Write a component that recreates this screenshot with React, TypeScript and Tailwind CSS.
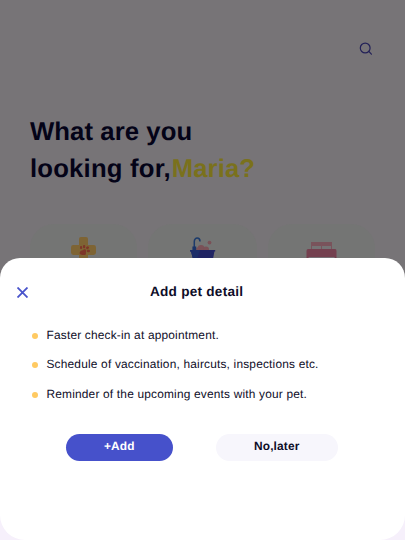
import React from "react";

const benefits = [
  "Faster check-in at appointment.",
  "Schedule of vaccination, haircuts, inspections etc.",
  "Reminder of the upcoming events with your pet.",
];

function SearchIcon() {
  return (
    <svg width="14" height="14" viewBox="0 0 14 14" fill="none" stroke="#232158" strokeWidth="1.2" strokeLinecap="round">
      <circle cx="6.2" cy="6" r="4.9" />
      <path d="M9.8 9.4L12.4 12.2" />
    </svg>
  );
}

function VetIcon() {
  return (
    <svg width="25" height="26" viewBox="0 0 25 26">
      <rect x="8" y="0" width="9" height="26" rx="2" fill="#7e6434" />
      <rect x="0" y="8" width="25" height="10" rx="2.4" fill="#7e6434" />
      <g fill="#7d3528">
        <rect x="9" y="9" width="2.1" height="3" rx="0.9" />
        <rect x="12" y="8" width="2.2" height="3.2" rx="1" />
        <ellipse cx="16.5" cy="10.7" rx="1.6" ry="1.3" transform="rotate(-40 16.5 10.7)" />
        <ellipse cx="17.4" cy="14" rx="1.6" ry="1.2" />
        <path d="M8.8 15.2C9.6 13.4 11.6 13.8 12.7 12.6C14.6 11.4 15.6 13 15 14.6C14.6 16 15.6 17.4 14.2 18C12.6 18.4 11.1 17.6 9.6 17.4C8.6 17 8.4 16 8.8 15.2Z" />
      </g>
    </svg>
  );
}

function BathIcon() {
  return (
    <svg width="26" height="26" viewBox="0 0 26 26">
      <g fill="#7a5157">
        <circle cx="19.5" cy="5.6" r="1.9" />
        <circle cx="11" cy="11.4" r="3.4" />
        <circle cx="16" cy="12.4" r="3" />
        <circle cx="7.8" cy="12" r="1.8" />
      </g>
      <path d="M4.3 12V4.5C4.3 -.1 10 0 10 4.4" fill="none" stroke="#1c3b6b" strokeWidth="1.5" />
      <path d="M2.4 9.5H6.2V13H2.4Z" fill="#1b3468" />
      <path d="M0 13H25.2V14.6H24.4L23 22H3L1 14.6H0Z" fill="#202463" />
      <path d="M0 13H10L7 22H3L1 14.6H0Z" fill="#1c2d68" />
    </svg>
  );
}

function CaseIcon() {
  return (
    <svg width="32" height="26" viewBox="0 0 32 26">
      <path d="M5 0H26V7H5Z" fill="#79535b" />
      <path d="M6 4H15V7H6ZM16 4H25V7H16Z" fill="#757375" />
      <path d="M2 7H29.2Q30.5 7 30.5 9V16H.5V9Q.5 7 2 7Z" fill="#74404f" />
      <path d="M2.6 15H28.6V16H2.6Z" fill="#777075" />
    </svg>
  );
}

function CloseIcon() {
  return (
    <svg width="11" height="11" viewBox="0 0 11 11" fill="none" stroke="#4853cb" strokeWidth="1.8">
      <path d="M.5 .5L10.5 10.5M10.5 .5L.5 10.5" />
    </svg>
  );
}

export default function App() {
  return (
    <div className="relative h-[540px] w-[405px] overflow-hidden bg-[#777477] font-['Liberation_Sans',Arial,sans-serif] [text-rendering:geometricPrecision]">
      <header className="flex justify-end pt-[42px] pr-[32px]">
        <button aria-label="Search">
          <SearchIcon />
        </button>
      </header>
      <h1 className="mt-[58px] pl-[30px] text-[25.7px] leading-[37px] font-bold text-[#040317]">
        <span className="block tracking-[0.08px]">What are you</span>
        <span className="block tracking-[0.2px]">
          looking for,<span className="ml-[0.8px] tracking-[0.12px] text-[#7a711c]">Maria?</span>
        </span>
      </h1>
      <div className="mt-[36px] flex gap-[11px] pl-[30px]">
        <div className="flex h-[110px] w-[107px] justify-center rounded-[24px] bg-[#747574] pt-[13px]">
          <VetIcon />
        </div>
        <div className="flex h-[110px] w-[109px] justify-center rounded-[24px] bg-[#747574] pt-[13px]">
          <BathIcon />
        </div>
        <div className="flex h-[110px] w-[107px] justify-center rounded-[24px] bg-[#747574] pt-[18px]">
          <CaseIcon />
        </div>
      </div>

      <div className="absolute inset-x-0 bottom-0 h-[30px] bg-[#f6f0fb]" />
      <section className="absolute inset-x-0 top-[258px] bottom-0 rounded-t-[20px] rounded-b-[25px] bg-white text-[#0e0d28]">
        <div className="flex items-center pt-[24px] pl-[17px]">
          <button aria-label="Close" className="mt-px">
            <CloseIcon />
          </button>
          <h2 className="ml-[122px] text-[13.6px] leading-5 font-bold tracking-[0.24px]">Add pet detail</h2>
        </div>
        <ul className="mt-[18px] pl-[31.5px] text-[11.9px] tracking-[0.19px]">
          {benefits.map((text) => (
            <li key={text} className="flex h-[29.5px] items-center gap-[9px]">
              <span className="mt-[2px] size-[6px] rounded-full bg-[#ffca62]" />
              <span className="pt-[2px]">{text}</span>
            </li>
          ))}
        </ul>
        <div className="mt-[25px] flex gap-[43.5px] pl-[66px] text-[11.9px] font-bold tracking-[0.15px]">
          <button className="h-[27.5px] w-[106.5px] rounded-full bg-[#4651cb] pb-px text-white [text-rendering:geometricPrecision]">+Add</button>
          <button className="h-[27.5px] w-[121.5px] rounded-full bg-[#f7f6fc] pb-px [text-rendering:geometricPrecision]">No,later</button>
        </div>
      </section>
    </div>
  );
}
